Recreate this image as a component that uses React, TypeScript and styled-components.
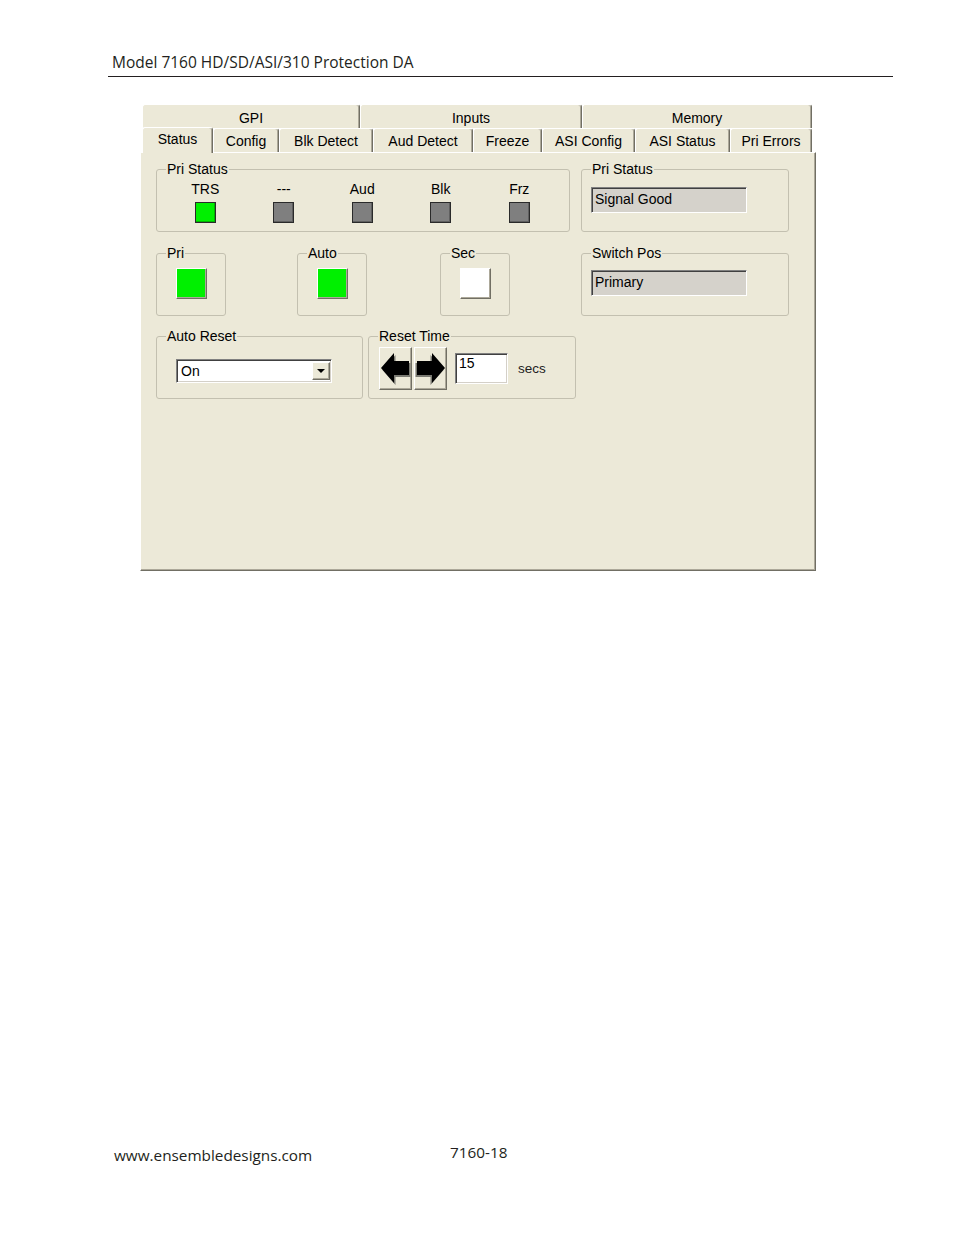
import styled, { createGlobalStyle } from "styled-components";

const GlobalStyle = createGlobalStyle`
    html, body {
        margin: 0;
        padding: 0;
        background: #fff;
    }
    body {
        font-family: "Open Sans", "Liberation Sans", sans-serif;
    }
`;

const Page = styled.div`
    width: 954px;
    height: 1235px;
    box-sizing: border-box;
    padding-top: 52px;
    display: flex;
    flex-direction: column;
`;
const Header = styled.div`
    margin-left: 108px;
    width: 785px;
    padding: 0 0 4px 4px;
    box-sizing: border-box;
    border-bottom: 1px solid #231f20;
    font-size: 15.5px;
    line-height: 20px;
    color: #231f20;
`;
const Panel = styled.div`
    margin: 26px 0 0 140px;
    width: 676px;
    font-family: "Liberation Sans", Arial, sans-serif;
    font-size: 14px;
    color: #000;
`;
const TabStrip = styled.div`
    padding: 1px 0 0 2px;
`;
const TabRow = styled.div`
    display: flex;
    align-items: flex-end;
    height: 24px;
`;
const Tab = styled.div<{ $w: number; $active?: boolean; $top?: boolean }>`
    position: relative;
    z-index: ${(p) => (p.$active ? 2 : 1)};
    width: ${(p) => p.$w}px;
    height: ${(p) => (p.$active ? 26 : 24)}px;
    margin-bottom: ${(p) => (p.$active ? -1 : 0)}px;
    box-sizing: border-box;
    padding-top: ${(p) => (p.$active ? 3 : p.$top ? 5 : 4)}px;
    background: #ece9d8;
    border-top: 1px solid #fff;
    border-left: 1px solid #fff;
    border-right: 1px solid #716f64;
    border-radius: 3px 3px 0 0;
    box-shadow: inset -1px 0 0 #aca899;
    text-align: center;
    line-height: 16px;
    white-space: nowrap;
`;
const Body = styled.div`
    position: relative;
    height: 419px;
    box-sizing: border-box;
    background: #ece9d8;
    border-top: 1px solid #fff;
    border-left: 1px solid #fff;
    border-right: 1px solid #716f64;
    border-bottom: 1px solid #716f64;
    box-shadow: inset -1px -1px 0 #aca899;
    padding: 8px 0 0 15px;
    display: flex;
    flex-direction: column;
`;
const Row = styled.div<{ $mt?: number }>`
    display: flex;
    margin-top: ${(p) => p.$mt ?? 0}px;
`;
const Group = styled.fieldset<{ $w: number; $ml?: number }>`
    margin: 0 0 0 ${(p) => p.$ml ?? 0}px;
    padding: 0;
    min-width: 0;
    width: ${(p) => p.$w}px;
    height: 71px;
    box-sizing: border-box;
    border: 1px solid #c3c0b0;
    border-radius: 3px;
`;
const Legend = styled.legend`
    margin-left: 9px;
    padding: 0 1px;
    line-height: 16px;
`;
const IndicatorGrid = styled.div`
    display: grid;
    grid-template-columns: repeat(5, 78.5px);
    padding-left: 9px;
    margin-top: 4px;
`;
const Indicator = styled.div`
    display: flex;
    flex-direction: column;
    align-items: center;
    line-height: 16px;
`;
const Led = styled.div<{ $on?: boolean }>`
    width: 21px;
    height: 21px;
    margin-top: 5px;
    box-sizing: border-box;
    background: ${(p) => (p.$on ? "#00f000" : "#7f7f7f")};
    border: 1px solid #2a2a2a;
    box-shadow: inset -1px -1px 0 rgba(0, 0, 0, 0.25);
`;
const ReadBox = styled.div<{ $mt: number }>`
    margin: ${(p) => p.$mt}px 0 0 9px;
    width: 156px;
    height: 26px;
    box-sizing: border-box;
    padding-left: 3px;
    background: #d5d2cb;
    border-top: 1px solid #808080;
    border-left: 1px solid #808080;
    border-right: 1px solid #fff;
    border-bottom: 1px solid #fff;
    box-shadow: inset 1px 1px 0 #404040;
    line-height: 23px;
`;
const Lamp = styled.div<{ $color: string }>`
    width: 31px;
    height: 31px;
    margin: 7px auto 0;
    box-sizing: border-box;
    background: ${(p) => p.$color};
    border-top: 1px solid #fff;
    border-left: 1px solid #fff;
    border-right: 1px solid #716f64;
    border-bottom: 1px solid #716f64;
    box-shadow: inset -1px -1px 0 #aca899;
`;
const Combo = styled.div`
    margin: 15px 0 0 19px;
    width: 156px;
    height: 24px;
    box-sizing: border-box;
    display: flex;
    align-items: center;
    justify-content: space-between;
    padding: 0 1px 0 4px;
    background: #fff;
    border-top: 1px solid #808080;
    border-left: 1px solid #808080;
    border-right: 1px solid #fff;
    border-bottom: 1px solid #fff;
    box-shadow: inset 1px 1px 0 #404040, inset -1px -1px 0 #d4d0c8;
`;
const DropButton = styled.div`
    width: 18px;
    height: 18px;
    box-sizing: border-box;
    display: flex;
    align-items: center;
    justify-content: center;
    background: #ece9d8;
    border-top: 1px solid #fff;
    border-left: 1px solid #fff;
    border-right: 1px solid #716f64;
    border-bottom: 1px solid #716f64;
    box-shadow: inset -1px -1px 0 #aca899;
`;
const Triangle = styled.div`
    width: 0;
    height: 0;
    border-left: 4px solid transparent;
    border-right: 4px solid transparent;
    border-top: 4px solid #000;
`;
const TimeRow = styled.div`
    display: flex;
    align-items: center;
    margin-top: 3px;
    padding-left: 10px;
`;
const ArrowButton = styled.div<{ $ml?: number }>`
    width: 33px;
    height: 43px;
    margin-left: ${(p) => p.$ml ?? 0}px;
    box-sizing: border-box;
    display: flex;
    align-items: center;
    justify-content: center;
    background: #ece9d8;
    border-top: 1px solid #fff;
    border-left: 1px solid #fff;
    border-right: 1px solid #716f64;
    border-bottom: 1px solid #716f64;
    box-shadow: inset -1px -1px 0 #aca899;
`;
const NumberBox = styled.div`
    margin-left: 8px;
    width: 53px;
    height: 31px;
    box-sizing: border-box;
    padding: 1px 0 0 3px;
    background: #fff;
    border-top: 1px solid #808080;
    border-left: 1px solid #808080;
    border-right: 1px solid #fff;
    border-bottom: 1px solid #fff;
    box-shadow: inset 1px 1px 0 #404040, inset -1px -1px 0 #d4d0c8;
    line-height: 16px;
`;
const Unit = styled.span`
    margin-left: 10px;
    font-size: 13.5px;
    color: #222;
`;
const Footer = styled.div`
    margin-top: auto;
    display: flex;
    align-items: flex-end;
    padding: 0 0 70px 114px;
    font-size: 15.3px;
    line-height: 20px;
    color: #231f20;
`;
const FooterLink = styled.span`
    width: 336px;
`;
const PageNumber = styled.span`
    padding-bottom: 3px;
`;

function Arrow({ dir }: { dir: "left" | "right" }) {
    const pts = "1,17 14,2 14,10 29,10 29,24 14,24 14,32";
    const flip = dir === "right" ? "translate(31,0) scale(-1,1)" : undefined;
    return (
        <svg width="31" height="36" viewBox="0 0 31 36">
            <g transform={flip}>
                <polygon points={pts} fill="#7a7a72" transform="translate(1.5,2)" />
                <polygon points={pts} fill="#000" />
            </g>
        </svg>
    );
}

const topTabs = [
    { label: "GPI", w: 218 },
    { label: "Inputs", w: 222 },
    { label: "Memory", w: 230 },
];
const tabs = [
    { label: "Status", w: 71 },
    { label: "Config", w: 66 },
    { label: "Blk Detect", w: 94 },
    { label: "Aud Detect", w: 100 },
    { label: "Freeze", w: 69 },
    { label: "ASI Config", w: 93 },
    { label: "ASI Status", w: 95 },
    { label: "Pri Errors", w: 82 },
];
const indicators = [
    { label: "TRS", on: true },
    { label: "---", on: false },
    { label: "Aud", on: false },
    { label: "Blk", on: false },
    { label: "Frz", on: false },
];

export default function App() {
    return (
        <Page>
            <GlobalStyle />
            <Header>Model 7160 HD/SD/ASI/310 Protection DA</Header>
            <Panel>
                <TabStrip>
                    <TabRow>
                        {topTabs.map((t) => (
                            <Tab key={t.label} $w={t.w} $top>
                                {t.label}
                            </Tab>
                        ))}
                    </TabRow>
                    <TabRow>
                        {tabs.map((t, i) => (
                            <Tab key={t.label} $w={t.w} $active={i === 0}>
                                {t.label}
                            </Tab>
                        ))}
                    </TabRow>
                </TabStrip>
                <Body>
                    <Row>
                        <Group $w={414}>
                            <Legend>Pri Status</Legend>
                            <IndicatorGrid>
                                {indicators.map((ind) => (
                                    <Indicator key={ind.label}>
                                        {ind.label}
                                        <Led $on={ind.on} />
                                    </Indicator>
                                ))}
                            </IndicatorGrid>
                        </Group>
                        <Group $w={208} $ml={11}>
                            <Legend>Pri Status</Legend>
                            <ReadBox $mt={10}>Signal Good</ReadBox>
                        </Group>
                    </Row>
                    <Row $mt={13}>
                        <Group $w={70}>
                            <Legend>Pri</Legend>
                            <Lamp $color="#00f000" />
                        </Group>
                        <Group $w={70} $ml={71}>
                            <Legend>Auto</Legend>
                            <Lamp $color="#00f000" />
                        </Group>
                        <Group $w={70} $ml={73}>
                            <Legend>Sec</Legend>
                            <Lamp $color="#ffffff" />
                        </Group>
                        <Group $w={208} $ml={71}>
                            <Legend>Switch Pos</Legend>
                            <ReadBox $mt={9}>Primary</ReadBox>
                        </Group>
                    </Row>
                    <Row $mt={12}>
                        <Group $w={207}>
                            <Legend>Auto Reset</Legend>
                            <Combo>
                                On
                                <DropButton>
                                    <Triangle />
                                </DropButton>
                            </Combo>
                        </Group>
                        <Group $w={208} $ml={5}>
                            <Legend>Reset Time</Legend>
                            <TimeRow>
                                <ArrowButton>
                                    <Arrow dir="left" />
                                </ArrowButton>
                                <ArrowButton $ml={2}>
                                    <Arrow dir="right" />
                                </ArrowButton>
                                <NumberBox>15</NumberBox>
                                <Unit>secs</Unit>
                            </TimeRow>
                        </Group>
                    </Row>
                </Body>
            </Panel>
            <Footer>
                <FooterLink>www.ensembledesigns.com</FooterLink>
                <PageNumber>7160-18</PageNumber>
            </Footer>
        </Page>
    );
}
